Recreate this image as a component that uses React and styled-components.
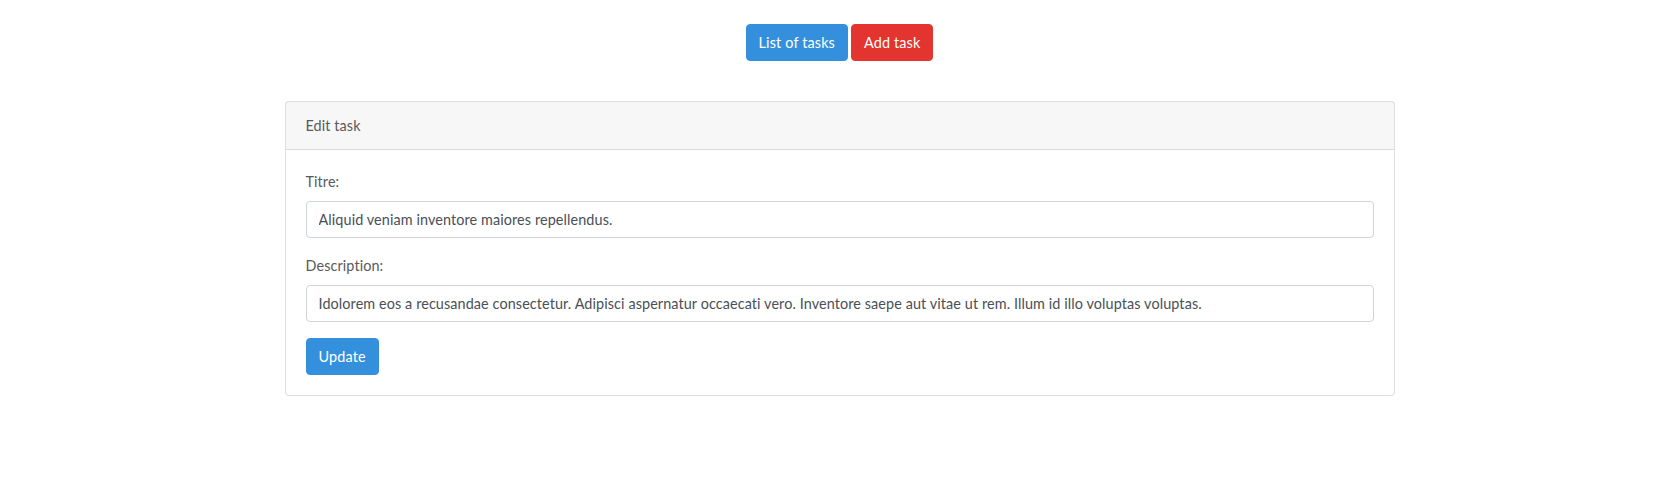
import React from "react";
import styled, { createGlobalStyle } from "styled-components";

const Global = createGlobalStyle`
  * { box-sizing: border-box; }
  html, body { margin: 0; padding: 0; background: #fff; }
  body {
    font-family: "Lato", "Noto Sans", sans-serif;
    font-size: 14.4px;
    line-height: 1.6;
    letter-spacing: 0.1px;
    color: #212529;
  }
`;

const Main = styled.main`
  padding-top: 24px;
`;

const Container = styled.div`
  width: 1140px;
  margin: 0 auto;
  padding: 0 15px;
`;

const Nav = styled.div`
  display: flex;
  justify-content: center;
  gap: 3px;
  margin-bottom: 40px;
`;

const Button = styled.button`
  display: inline-block;
  font-family: inherit;
  font-size: 14.4px;
  line-height: 1.6;
  letter-spacing: 0.15px;
  font-weight: 400;
  padding: 6px 12px;
  border: 1px solid ${(p) => p.$bg};
  border-radius: 4px;
  background: ${(p) => p.$bg};
  color: #fff;
  cursor: pointer;
`;

const Card = styled.div`
  border: 1px solid rgba(0, 0, 0, 0.125);
  border-radius: 4px;
  background: #fff;
`;

const CardHeader = styled.div`
  padding: 12px 20px;
  background: rgba(0, 0, 0, 0.03);
  border-bottom: 1px solid rgba(0, 0, 0, 0.125);
  color: #5a5a5a;
`;

const CardBody = styled.div`
  padding: 20px;
`;

const Group = styled.div`
  margin-bottom: 16px;
`;

const Label = styled.label`
  display: block;
  margin-bottom: 8px;
  color: #5a5a5a;
`;

const Input = styled.input`
  display: block;
  width: 100%;
  height: 37px;
  padding: 6px 12px;
  font-family: inherit;
  font-size: 14.4px;
  line-height: 1.6;
  letter-spacing: 0.1px;
  color: #495057;
  background: #fff;
  border: 1px solid #ced4da;
  border-radius: 4px;
  outline: none;
`;

export default function App() {
  return (
    <>
      <Global />
      <Main>
        <Container>
          <Nav>
            <Button $bg="#3490dc">List of tasks</Button>
            <Button $bg="#e3342f">Add task</Button>
          </Nav>
          <Card>
            <CardHeader>Edit task</CardHeader>
            <CardBody>
              <Group>
                <Label>Titre:</Label>
                <Input defaultValue="Aliquid veniam inventore maiores repellendus." />
              </Group>
              <Group>
                <Label>Description:</Label>
                <Input defaultValue="Idolorem eos a recusandae consectetur. Adipisci aspernatur occaecati vero. Inventore saepe aut vitae ut rem. Illum id illo voluptas voluptas." />
              </Group>
              <Button $bg="#3490dc">Update</Button>
            </CardBody>
          </Card>
        </Container>
      </Main>
    </>
  );
}
